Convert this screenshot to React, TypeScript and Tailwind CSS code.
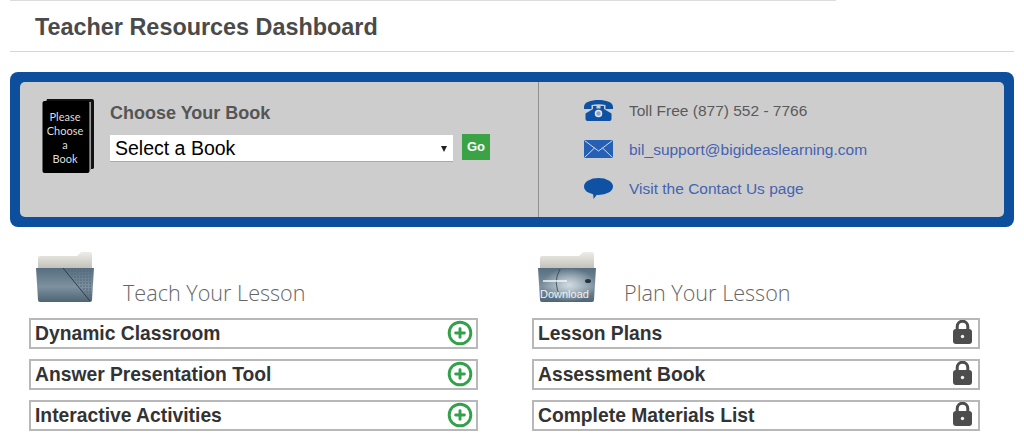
import { CirclePlus } from "lucide-react";

const teachItems = ["Dynamic Classroom", "Answer Presentation Tool", "Interactive Activities"];
const planItems = ["Lesson Plans", "Assessment Book", "Complete Materials List"];

function BookIcon() {
  return (
    <svg width="52" height="76" viewBox="0 0 52 76" className="shrink-0">
      <path d="M5 1h45a2 2 0 0 1 2 2v67a2 2 0 0 1-2 1h-1V4H4z" fill="#111" />
      <path d="M48 4h1v68h-1z" fill="#9a9a9a" />
      <rect x="0.500" y="3" width="47" height="72" rx="2" fill="#000" />
      <g fill="#dedede" fontFamily="Lato, sans-serif" fontSize="11" textAnchor="middle">
        <text x="23" y="23">Please</text>
        <text x="23" y="37">Choose</text>
        <text x="23" y="51">a</text>
        <text x="23" y="64.500">Book</text>
      </g>
    </svg>
  );
}

function PhoneIcon() {
  return (
    <svg width="29" height="21" viewBox="0 0 29 21" fill="#0f52a3">
      <path d="M0 7C0 2 7 0 14.500 0S29 2 29 7v2h-7.500V5q-7-1.500-14 0v4H0z" />
      <path d="M9 6h3.500v2.500h4V6H20v3l7.500 4.500V19q0 2-2 2h-22q-2 0-2-2v-5.500L9 9z" />
      <circle cx="14.500" cy="13.500" r="3" fill="#8ea6c8" stroke="#e4e7ec" strokeWidth="1.500" />
    </svg>
  );
}

function MailIcon() {
  return (
    <svg width="29" height="18" viewBox="0 0 29 18">
      <rect width="29" height="18" fill="#2660b4" />
      <path d="M0.500 0.500 14.500 11 28.500 0.500M0.500 17.500 10.500 8M28.500 17.500 18.500 8" fill="none" stroke="#d5dae4" strokeWidth="1" />
    </svg>
  );
}

function ChatIcon() {
  return (
    <svg width="29" height="21" viewBox="0 0 29 21" fill="#0f52a3">
      <ellipse cx="14.500" cy="8.500" rx="14.500" ry="8.500" />
      <path d="M9 14h6l-5.500 7z" />
    </svg>
  );
}

function LockIcon() {
  return (
    <svg width="19" height="24" viewBox="0 0 19 24" className="shrink-0">
      <path d="M4.200 11V6.500a5.300 5.300 0 0 1 10.600 0V11" fill="none" stroke="#4d4d4d" strokeWidth="3" />
      <rect y="9" width="19" height="15" rx="3" fill="#4d4d4d" />
      <circle cx="9.500" cy="16.500" r="1.700" fill="#f2f2f2" />
    </svg>
  );
}

function FolderIcon({ id, download }: { id: string; download?: boolean }) {
  return (
    <svg width="60" height="50" viewBox="0 0 60 50" className="shrink-0">
      <defs>
        <linearGradient id={`${id}-paper`} x1="0" y1="0" x2="0" y2="1">
          <stop offset="0" stopColor="#eeede7" />
          <stop offset="1" stopColor="#bdbcb5" />
        </linearGradient>
        <linearGradient id={`${id}-front`} x1="0" y1="0" x2="0" y2="1">
          <stop offset="0" stopColor="#566e80" />
          <stop offset="0.550" stopColor="#7d919f" />
          <stop offset="1" stopColor="#4f6474" />
        </linearGradient>
        <radialGradient id={`${id}-shine`}>
          <stop offset="0" stopColor="#dbe5e9" stopOpacity="0.900" />
          <stop offset="1" stopColor="#dbe5e9" stopOpacity="0" />
        </radialGradient>
        <pattern id={`${id}-dots`} width="3" height="3" patternUnits="userSpaceOnUse">
          <rect width="2" height="2" fill="#54687a" opacity="0.500" />
        </pattern>
      </defs>
      <path d="M3 6q0-2 2-2h37l3-3q1-1 2-1h8q2 0 2 2v16H3z" fill={`url(#${id}-paper)`} />
      <path d="M1 16h58l-2 32q0 2-2 2H5q-2 0-2-2z" fill={`url(#${id}-front)`} />
      {download ? (
        <g>
          <ellipse cx="32" cy="33" rx="27" ry="17" fill={`url(#${id}-shine)`} />
          <path d="M23 17q-8 14 1 29" fill="none" stroke="#2f3f4a" strokeWidth="0.800" />
          <path d="M6 29h24" stroke="#f4f6f7" strokeWidth="1.500" />
          <ellipse cx="51" cy="29" rx="3" ry="2" fill="#26333c" />
          <text x="3" y="46" fontSize="11" fill="#eef2f4" fontFamily="Liberation Sans, sans-serif">Download</text>
        </g>
      ) : (
        <g>
          <path d="M30 16h27l-1 32z" fill={`url(#${id}-dots)`} />
          <path d="M28 16 55 49" stroke="#2c3a45" strokeWidth="1" />
        </g>
      )}
    </svg>
  );
}

function ResourceColumn({
  id,
  title,
  items,
  locked,
  download,
}: {
  id: string;
  title: string;
  items: string[];
  locked?: boolean;
  download?: boolean;
}) {
  return (
    <div className={locked ? "w-[448px]" : "w-[449px]"}>
      <div className={`flex items-end h-[50px] ${locked ? "pl-[5px]" : "pl-[6px]"}`}>
        <FolderIcon id={id} download={download} />
        <h2 className={`${locked ? "ml-[27px]" : "ml-[28px]"} -mb-[5px] font-['Open_Sans',sans-serif] font-light text-[21.6px] leading-[28px] text-[#666]`}>
          {title}
        </h2>
      </div>
      <div className="mt-4 flex flex-col gap-[10px]">
        {items.map((item) => (
          <div
            key={item}
            className="flex items-center justify-between h-[31px] pl-[4px] pr-[5px] border-2 border-[#b8b8b8] bg-white"
          >
            <span className="mt-[1px] text-[19.3px] font-bold text-[#333]">{item}</span>
            {locked ? (
              <span className="pr-[1px] mb-[3px]">
                <LockIcon />
              </span>
            ) : (
              <CirclePlus size={26} strokeWidth={2.7} className="text-[#33a04a] -mr-[2px] mb-[1px]" />
            )}
          </div>
        ))}
      </div>
    </div>
  );
}

export default function App() {
  return (
    <div className="w-[1024px] h-[438px] overflow-hidden bg-white px-[10px] font-['Liberation_Sans',Arial,sans-serif]">
      <div className="w-[826px] h-px bg-[#dcdcdc]" />
      <h1 className="h-[50px] pl-[25px] pt-[9px] text-[23.4px] leading-[34px] font-bold text-[#4a4a4a]">
        Teacher Resources Dashboard
      </h1>
      <div className="h-[1px] bg-[#d6d6d6]" />

      <div className="mt-[20px] h-[155px] rounded-lg bg-[#0e4f9d] p-[10px]">
        <div className="h-full rounded-[5px] bg-[#cdcdcd] flex">
          <div className="w-[519px] h-full border-r border-[#8f8f8f] pl-[22px] pt-[16px] flex">
            <BookIcon />
            <div className="ml-[16px] mt-[2px]">
              <div className="text-[18px] leading-[26px] font-bold text-[#555]">Choose Your Book</div>
              <div className="mt-[8px] flex items-center">
                <div className="relative">
                  <select className="block w-[343px] h-[27px] appearance-none rounded-none bg-white pl-[5px] text-[19.5px] leading-[26px] text-black border-b border-[#aaa]">
                    <option>Select a Book</option>
                  </select>
                  <span className="absolute right-[6px] top-[11px] w-0 h-0 border-x-[3px] border-x-transparent border-t-[6px] border-t-[#222]" />
                </div>
                <button className="ml-[9px] mb-[2px] w-[28px] h-[26px] bg-[#3aa346] text-white text-[13px] font-bold">Go</button>
              </div>
            </div>
          </div>
          <div className="pl-[45px] pt-[17.500px] flex flex-col gap-[18.300px] text-[15.5px] leading-[21px]">
            <div className="flex items-center gap-[16px] h-[21px] text-[#5a5a5a]">
              <PhoneIcon />
              <span>Toll Free (877) 552 - 7766</span>
            </div>
            <div className="flex items-center gap-[16px] h-[21px] text-[#4463b2]">
              <MailIcon />
              <a>bil_support@bigideaslearning.com</a>
            </div>
            <div className="flex items-center gap-[16px] h-[21px] text-[#4463b2]">
              <ChatIcon />
              <a>Visit the Contact Us page</a>
            </div>
          </div>
        </div>
      </div>

      <div className="mt-[25px] pl-[19px] flex gap-[54px]">
        <ResourceColumn id="teach" title="Teach Your Lesson" items={teachItems} />
        <ResourceColumn id="plan" title="Plan Your Lesson" items={planItems} locked download />
      </div>
    </div>
  );
}
